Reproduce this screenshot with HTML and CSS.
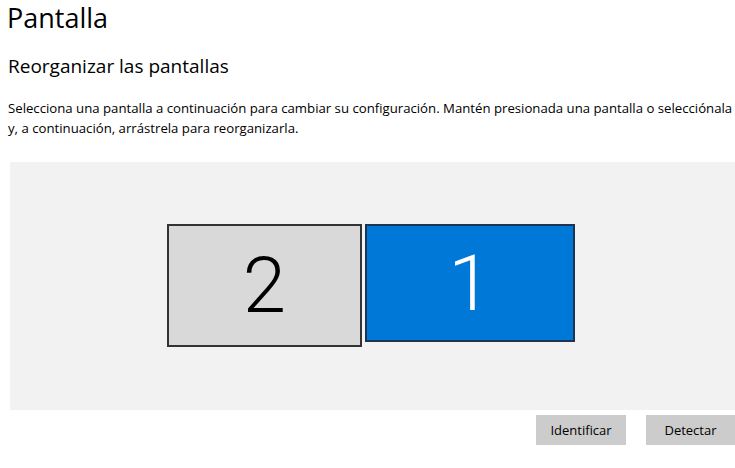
FILE: index.html
```html
<!DOCTYPE html>
<html lang="es">
<head>
    <meta charset="UTF-8">
    <title>Pantalla</title>
    <link rel="stylesheet" href="styles.css">
</head>
<body>
    <h1 class="page-title">Pantalla</h1>

    <h2 class="section-title">Reorganizar las pantallas</h2>

    <p class="description">
        Selecciona una pantalla a continuación para cambiar su configuración. Mantén presionada una pantalla o selecciónala<br>
        y, a continuación, arrástrela para reorganizarla.
    </p>

    <!-- zona de pantallas -->
    <div class="arrange-area">
        <div class="monitor monitor-second">2</div>
        <div class="monitor monitor-main">1</div>
    </div>

    <div class="actions">
        <button class="action-button">Identificar</button>
        <button class="action-button">Detectar</button>
    </div>
</body>
</html>
```

FILE: styles.css
```css
* {
    box-sizing: border-box;
}

body {
    margin: 0;
    background-color: #fff;
    color: #000;
    font-family: 'Segoe UI', 'Open Sans', sans-serif;
    overflow: hidden;
}

.page-title {
    margin: 0;
    padding-left: 7px;
    font-size: 27px;
    font-weight: 400;
    line-height: 36px;
}

.section-title {
    margin: 17px 0 0 0;
    padding-left: 8px;
    font-size: 19px;
    font-weight: 400;
    line-height: 26px;
}

.description {
    margin: 19px 0 0 0;
    padding-left: 8px;
    font-size: 13.2px;
    line-height: 20px;
    white-space: nowrap;
}

.arrange-area {
    display: flex;
    align-items: flex-start;
    gap: 3px;
    margin: 24px 0 0 10px;
    height: 248px;
    padding: 62px 0 0 157px;
    background-color: #f2f2f2;
}

.monitor {
    display: flex;
    justify-content: center;
    align-items: center;
    font-family: 'Segoe UI Light', 'Roboto', 'Open Sans', sans-serif;
    font-weight: 300;
    font-size: 78px;
    border: 2px solid #333;
}

.monitor-second {
    width: 195px;
    height: 123px;
    background-color: #d9d9d9;
    color: #000;
}

.monitor-main {
    width: 210px;
    height: 118px;
    background-color: #0078d7;
    border-color: #1d3552;
    color: #fff;
}

.actions {
    display: flex;
    justify-content: flex-end;
    gap: 20px;
    margin-top: 5px;
}

.action-button {
    height: 30px;
    padding: 0;
    border: none;
    background-color: #cccccc;
    color: #000;
    font-family: 'Segoe UI', 'Open Sans', sans-serif;
    font-size: 13px;
}

.action-button:first-child {
    width: 90px;
}

.action-button:last-child {
    width: 89px;
}
```
